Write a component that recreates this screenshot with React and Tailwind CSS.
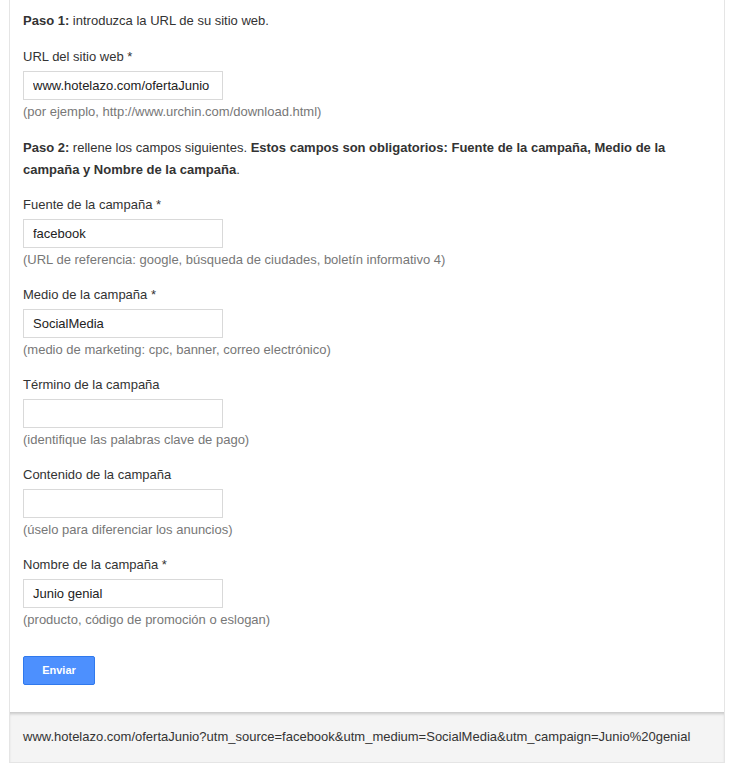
import React from "react";

const fields = [
  { label: "Fuente de la campaña *", value: "facebook", hint: "(URL de referencia: google, búsqueda de ciudades, boletín informativo 4)" },
  { label: "Medio de la campaña *", value: "SocialMedia", hint: "(medio de marketing: cpc, banner, correo electrónico)" },
  { label: "Término de la campaña", value: "", hint: "(identifique las palabras clave de pago)" },
  { label: "Contenido de la campaña", value: "", hint: "(úselo para diferenciar los anuncios)" },
  { label: "Nombre de la campaña *", value: "Junio genial", hint: "(producto, código de promoción o eslogan)" },
];

const Field = ({ label, value, hint }) => (
  <div className="flex flex-col">
    <label className="leading-[18px] text-[#333]">{label}</label>
    <input
      readOnly
      value={value}
      className="mt-[5px] h-[29px] w-[200px] border border-[#d9d9d9] bg-white px-[9px] text-[13px] text-[#222] outline-none"
    />
    <p className="mt-[3px] leading-[18px] text-[#777]">{hint}</p>
  </div>
);

const App = () => {
  return (
    <div className="min-h-[775px] bg-white font-['Liberation_Sans',Arial,sans-serif] text-[13px]">
      <div className="mx-[9px] w-[716px]">
        <div className="border-x border-[#e5e5e5] bg-white pl-[13px] pr-[14px] pt-[12px] pb-[27px]">
          <p className="leading-[18px] text-[#333]">
            <b>Paso 1:</b> introduzca la URL de su sitio web.
          </p>

          <div className="mt-[18px]">
            <Field label="URL del sitio web *" value="www.hotelazo.com/ofertaJunio" hint="(por ejemplo, http://www.urchin.com/download.html)" />
          </div>

          <p className="mt-[16px] leading-[22px] text-[#333]">
            <b>Paso 2:</b> rellene los campos siguientes.{" "}
            <b>Estos campos son obligatorios: Fuente de la campaña, Medio de la campaña y Nombre de la campaña</b>.
          </p>

          <div className="mt-[15px] flex flex-col gap-[17px]">
            {fields.map((f) => (
              <Field key={f.label} {...f} />
            ))}
          </div>

          <button className="mt-[27px] h-[29px] w-[72px] rounded-[2px] border border-[#3079ed] bg-[#4d90fe] text-[11px] font-bold text-white">
            Enviar
          </button>
        </div>

        <div className="border-x border-b border-[#e5e5e5] bg-[#f4f4f4] px-[13px] py-[16px] shadow-[inset_0_3px_3px_-1px_rgba(0,0,0,0.18)]">
          <p className="leading-[18px] text-[#333]">
            www.hotelazo.com/ofertaJunio?utm_source=facebook&amp;utm_medium=SocialMedia&amp;utm_campaign=Junio%20genial
          </p>
        </div>
      </div>
    </div>
  );
};

export default App;
